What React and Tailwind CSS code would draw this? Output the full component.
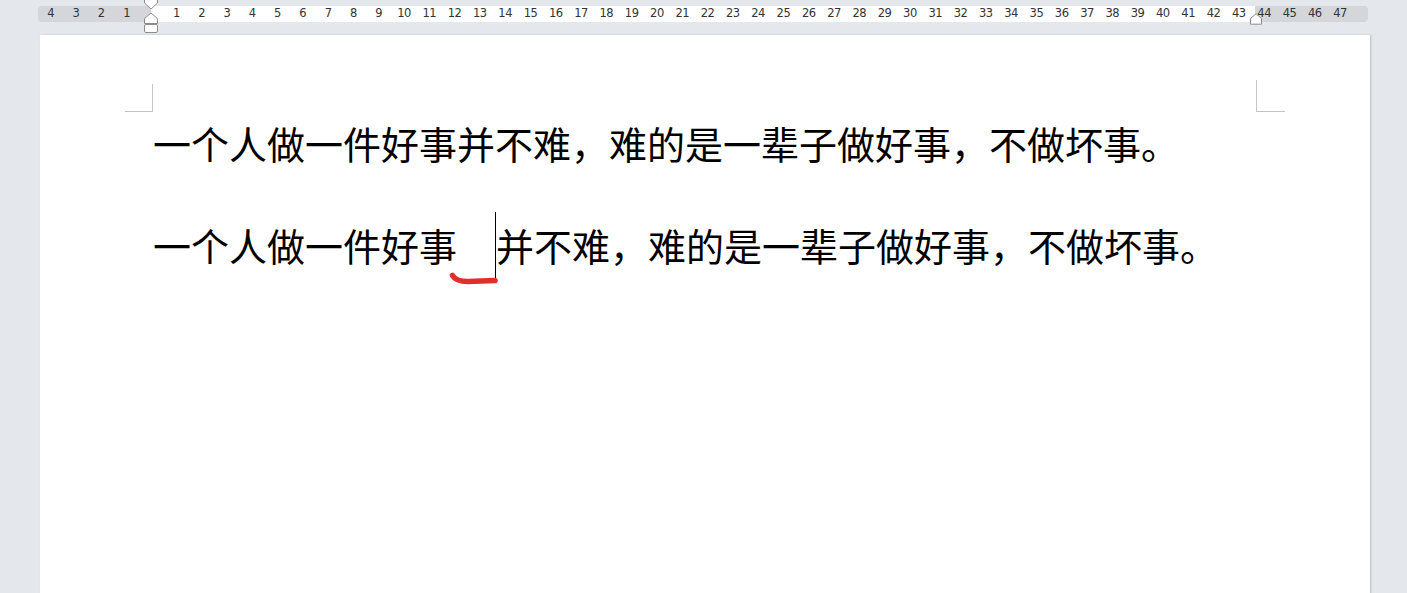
import React from 'react';

const LEFT_NUMS = ['4', '3', '2', '1'];
const MID_NUMS = Array.from({ length: 43 }, (_, i) => String(i + 1));
const RIGHT_NUMS = ['44', '45', '46', '47'];

const LINE_A = '一个人做一件好事并不难，难的是一辈子做好事，不做坏事。';

function Cells({ nums }) {
  return nums.map((n) => (
    <span key={n} className="w-[25.3px] shrink-0 text-center leading-none">{n}</span>
  ));
}

function Ruler() {
  return (
    <div className="relative h-[35px] pt-[6px] pl-[38px]">
      <div className="flex w-[1330px] h-[16px] rounded-[4px] bg-[#d4d6da] overflow-hidden text-[11.5px] text-[#333] font-['DejaVu_Sans',sans-serif] tracking-[-0.5px]">
        <div className="flex items-center w-[113px] shrink-0">
          <Cells nums={LEFT_NUMS} />
        </div>
        <div className="flex items-center w-[1104px] shrink-0 bg-white pl-[12.65px]">
          <Cells nums={MID_NUMS} />
        </div>
        <div className="flex items-center flex-1 ml-[-3.5px]">
          <Cells nums={RIGHT_NUMS} />
        </div>
      </div>
      {/* indent markers */}
      <svg className="absolute left-[143px] top-0" width="16" height="34" viewBox="0 0 16 34">
        <path d="M1.5 -2 V3 L8 9 L14.5 3 V-2" fill="#fff" stroke="#8c8c8c" strokeWidth="1" />
        <path d="M8 13 L1.5 18.5 V23.5 H14.5 V18.5 Z" fill="#fff" stroke="#8c8c8c" strokeWidth="1" />
        <rect x="1.5" y="24.5" width="13" height="8" rx="1.5" fill="#fff" stroke="#8c8c8c" strokeWidth="1" />
      </svg>
      <svg className="absolute left-[1249px] top-[13px]" width="14" height="12" viewBox="0 0 14 12">
        <path d="M7 0.8 L1.5 5.5 V11.2 H12.5 V5.5 Z" fill="#fff" stroke="#8c8c8c" strokeWidth="1" />
      </svg>
    </div>
  );
}

function Cursor() {
  return (
    <span className="relative inline-block w-px h-[38px] align-top">
      <span className="absolute left-0 top-[-14px] w-px h-[68px] bg-black" />
      <svg className="absolute left-[-47px] top-[44px]" width="50" height="16" viewBox="0 0 50 16">
        <path d="M4.5 5.5 C7 10 12 11.5 20 11.5 L47 10.5" fill="none" stroke="#e0302c" strokeWidth="5.5" strokeLinecap="round" />
      </svg>
    </span>
  );
}

export default function App() {
  return (
    <div className="h-[593px] overflow-hidden bg-[#e4e7eb]">
      <Ruler />
      <div className="relative ml-[40px] w-[1330px] h-[600px] bg-white shadow-[1px_0_2px_rgba(0,0,0,0.18)]">
        {/* margin corner marks */}
        <div className="absolute left-[85px] top-[49px] w-[28px] h-[28px] border-r border-b border-[#c4c4c4]" />
        <div className="absolute left-[1216px] top-[45px] w-[29px] h-[32px] border-l border-b border-[#c4c4c4]" />

        <div className="pl-[113px] pt-[89px] flex flex-col gap-[64px] text-[38px] leading-[38px] text-black whitespace-nowrap font-['Noto_Sans_CJK_SC','Noto_Sans_CJK_JP',sans-serif]">
          <p>{LINE_A}</p>
          <p>
            一个人做一件好事　<Cursor />并不难，难的是一辈子做好事，不做坏事。
          </p>
        </div>
      </div>
    </div>
  );
}
